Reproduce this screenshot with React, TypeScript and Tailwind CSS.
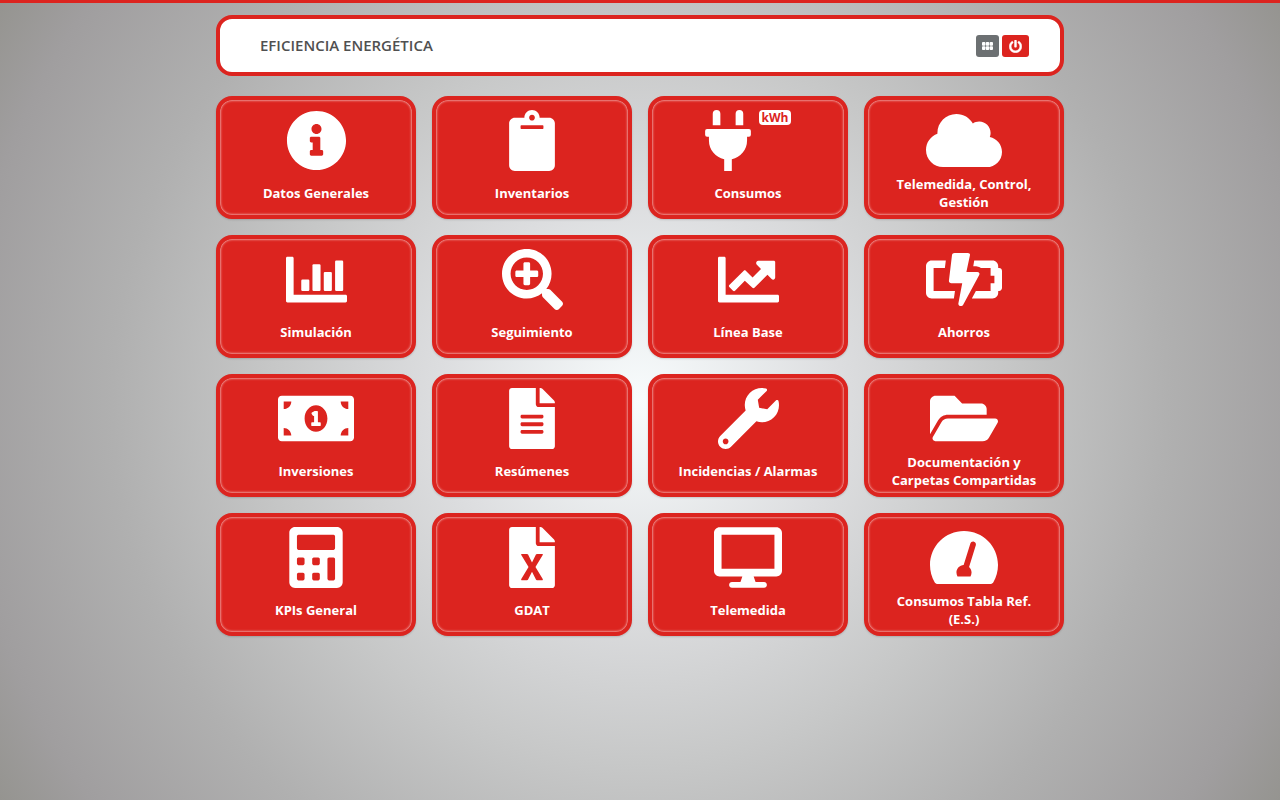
import type { ReactNode } from "react";
import {
  FaCalculator,
  FaClipboard,
  FaCloud,
  FaDesktop,
  FaFileAlt,
  FaFolderOpen,
  FaInfoCircle,
  FaMoneyBillAlt,
  FaPlug,
  FaPowerOff,
  FaSearchPlus,
  FaWrench,
} from "react-icons/fa";

const narrow = "h-[61px] w-[46px]";
const medium = "h-[61px] w-[54px]";
const square = "h-[61px] w-[61px]";
const wide = "h-[61px] w-[68px]";
const widest = "h-[61px] w-[76px]";

const axisPath =
  "M12 64h40c6.600 0 12 5.400 12 12v308h436c6.600 0 12 5.400 12 12v40c0 6.600-5.400 12-12 12H12c-6.600 0-12-5.400-12-12V76c0-6.600 5.400-12 12-12z";

function BarsIcon() {
  return (
    <svg className={square} viewBox="0 0 512 512" fill="currentColor" aria-hidden="true">
      <path d={axisPath} />
      <rect x="128" y="256" width="68" height="96" rx="10" />
      <rect x="222" y="128" width="68" height="224" rx="10" />
      <rect x="317" y="192" width="68" height="160" rx="10" />
      <rect x="412" y="96" width="68" height="256" rx="10" />
    </svg>
  );
}

function TrendIcon() {
  return (
    <svg className={square} viewBox="0 0 512 512" fill="currentColor" aria-hidden="true">
      <path d={axisPath} />
      <path d="M338 98h130c6.600 0 12 5.400 12 12v130c0 16-18 23-30 12l-35-35-109 109c-5 5-12 5-17 0l-64-60-82 84c-5 5-12 5-17 0l-31-31c-5-5-5-12 0-17l121-119c5-5 12-5 17 0l57 56 71-72-35-35c-12-12-4-34 12-34z" />
    </svg>
  );
}

function SheetIcon() {
  return (
    <svg className={narrow} viewBox="0 0 384 512" fill="currentColor" aria-hidden="true">
      <path
        fillRule="evenodd"
        d="M224 136V0H24C10.700 0 0 10.700 0 24v464c0 13.300 10.700 24 24 24h336c13.300 0 24-10.700 24-24V160H248c-13.200 0-24-10.800-24-24zM108 226h42c4 0 7 2 9 5l33 67 33-67c2-3 5-5 9-5h42c6 0 9 5 6 10l-61 100 61 100c3 5 0 11-6 11h-42c-4 0-7-2-9-6l-33-66-33 66c-2 4-5 6-9 6h-42c-6 0-9-6-6-11l61-100-61-100c-3-5 0-10 6-10z"
      />
      <path d="M384 121.900v6.100H256V0h6.100c6.400 0 12.500 2.500 17 7l97.900 98c4.500 4.500 7 10.600 7 16.900z" />
    </svg>
  );
}

function BatteryBoltIcon() {
  return (
    <svg className={widest} viewBox="0 0 640 512" fill="currentColor" aria-hidden="true">
      <path d="M48 96h119l-8 64H64v192h180l-9 64H48c-26.500 0-48-21.500-48-48V144c0-26.500 21.500-48 48-48z" />
      <path d="M406 96h154c26.500 0 48 21.500 48 48v16h8c13.300 0 24 10.700 24 24v144c0 13.300-10.700 24-24 24h-8v16c0 26.500-21.500 48-48 48H386l34-64h124v-64h32v-64h-32v-64h-82c-10-10-28-15-64-15z" />
      <path d="M241 32h112c12 0 20 9 17 20l-30 140h92c15 0 23 13 16 26L312 470c-4 6-10 10-18 10-14 0-24-12-21-25l32-167h-92c-12 0-22-10-20-22l26-217c1-10 10-17 22-17z" />
    </svg>
  );
}

function GaugeIcon() {
  return (
    <svg className={wide} viewBox="0 0 576 512" fill="currentColor" aria-hidden="true">
      <path
        fillRule="evenodd"
        d="M288 32C128.940 32 0 160.940 0 320c0 52.800 14.250 102.260 39.060 144.800 5.610 9.620 16.300 15.200 27.440 15.200h443c11.140 0 21.830-5.580 27.440-15.200C561.750 422.260 576 372.800 576 320c0-159.060-128.940-288-288-288zM388 152l-57 184c13 12 21 29 21 48 0 11.700-3.400 22.600-8.900 32H232.900c-5.500-9.400-8.900-20.300-8.900-32 0-34 27-62 61-64l57-182c4-13 17-20 30-16s20 17 16 30z"
      />
    </svg>
  );
}

function GridIcon() {
  return (
    <svg className="h-2 w-[11px]" viewBox="0 0 11 8" fill="currentColor" aria-hidden="true">
      <rect x="0" y="0" width="3.400" height="3.700" rx="0.900" />
      <rect x="3.800" y="0" width="3.400" height="3.700" rx="0.900" />
      <rect x="7.600" y="0" width="3.400" height="3.700" rx="0.900" />
      <rect x="0" y="4.300" width="3.400" height="3.700" rx="0.900" />
      <rect x="3.800" y="4.300" width="3.400" height="3.700" rx="0.900" />
      <rect x="7.600" y="4.300" width="3.400" height="3.700" rx="0.900" />
    </svg>
  );
}

type Tile = { label: string; icon: ReactNode; badge?: string };

const tiles: Tile[] = [
  { label: "Datos Generales", icon: <FaInfoCircle className={square} /> },
  { label: "Inventarios", icon: <FaClipboard className={narrow} /> },
  { label: "Consumos", icon: <FaPlug className={narrow} />, badge: "kWh" },
  { label: "Telemedida, Control, Gestión", icon: <FaCloud className={widest} /> },
  { label: "Simulación", icon: <BarsIcon /> },
  { label: "Seguimiento", icon: <FaSearchPlus className={square} /> },
  { label: "Línea Base", icon: <TrendIcon /> },
  { label: "Ahorros", icon: <BatteryBoltIcon /> },
  { label: "Inversiones", icon: <FaMoneyBillAlt className={widest} /> },
  { label: "Resúmenes", icon: <FaFileAlt className={narrow} /> },
  { label: "Incidencias / Alarmas", icon: <FaWrench className={square} /> },
  { label: "Documentación y Carpetas Compartidas", icon: <FaFolderOpen className={wide} /> },
  { label: "KPIs General", icon: <FaCalculator className={medium} /> },
  { label: "GDAT", icon: <SheetIcon /> },
  { label: "Telemedida", icon: <FaDesktop className={wide} /> },
  { label: "Consumos Tabla Ref. (E.S.)", icon: <GaugeIcon /> },
];

function TileLink({ label, icon, badge }: Tile) {
  return (
    <a
      href="#"
      className="flex flex-col items-center gap-1 rounded-2xl border-4 border-[#dc241f] bg-[#dc241f] px-4 pt-[10px] pb-1 text-white shadow-[inset_0_0_3px_rgba(255,255,255,1),0_1px_2px_rgba(0,0,0,0.15)]"
    >
      <span className="flex items-start gap-2">
        {icon}
        {badge && (
          <span className="rounded bg-white px-[3px] text-[12px] leading-[15px] font-bold text-[#dc241f]">
            {badge}
          </span>
        )}
      </span>
      <span className="flex min-h-9 items-center text-center text-[13px] leading-[18px] font-bold">
        {label}
      </span>
    </a>
  );
}

export default function App() {
  return (
    <div className="min-h-screen border-t-3 border-[#dc241f] bg-[radial-gradient(circle_at_center,#f8fcfd_0%,#dcdddf_27%,#c7c8c8_48%,#b0b0b0_70%,#a09e9f_90%,#959490_100%)] px-4 pt-3 pb-8 font-['Open_Sans','Noto_Sans',sans-serif]">
      <div className="mx-auto flex max-w-[848px] flex-col gap-5">
        <header className="flex items-start justify-between rounded-2xl border-4 border-[#dc241f] bg-white pt-4 pr-[31px] pb-[15px] pl-10">
          <h1 className="text-[15px] leading-5 font-semibold text-[#505050]">EFICIENCIA ENERGÉTICA</h1>
          <div className="flex gap-[3px]">
            <button
              type="button"
              aria-label="Menú"
              className="flex h-[22px] w-[23px] items-center justify-center rounded-[3px] bg-[#6c7072] text-white"
            >
              <GridIcon />
            </button>
            <button
              type="button"
              aria-label="Salir"
              className="flex h-[22px] w-[27px] items-center justify-center rounded-[3px] bg-[#dc241f] text-white"
            >
              <FaPowerOff className="size-[13px]" stroke="currentColor" strokeWidth={16} />
            </button>
          </div>
        </header>
        <nav className="grid grid-cols-2 gap-4 sm:grid-cols-4">
          {tiles.map((tile) => (
            <TileLink key={tile.label} {...tile} />
          ))}
        </nav>
      </div>
    </div>
  );
}
